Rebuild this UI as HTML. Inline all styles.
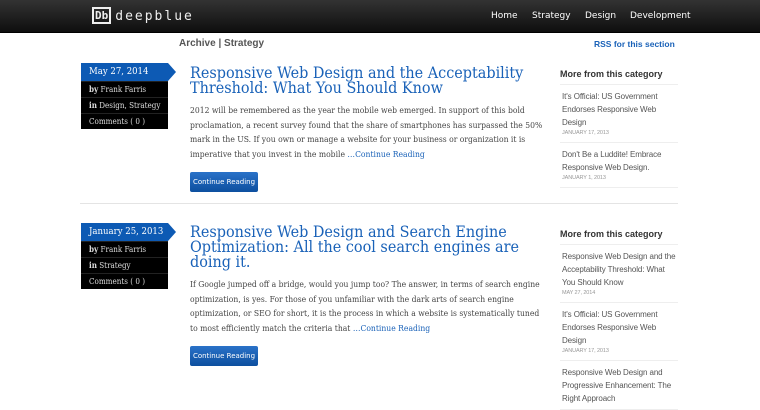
<!DOCTYPE html><html><head><style>
body{margin:0;width:760px;height:400px;overflow:hidden;background:#fff;font-family:"DejaVu Serif Condensed","DejaVu Serif",serif;font-stretch:condensed}
.hd{position:absolute;left:0;top:0;width:760px;height:32px;background:linear-gradient(#333,#0e0e0e);border-bottom:1px solid #000}
.logo{position:absolute;left:92px;top:7px;color:#eee;font:13px "DejaVu Sans Mono",monospace;letter-spacing:2px}
.logo b{display:inline-block;border:2px solid #eee;padding:0 1px;font-size:11px;line-height:13px;margin-right:4px;vertical-align:1px;letter-spacing:0}
.nav{position:absolute;top:11px;color:#fff;font:9px "DejaVu Sans",sans-serif}
.a{position:absolute;font:bold 10px "Liberation Sans",sans-serif;}
.date{position:absolute;left:81px;width:87px;height:18px;background:#0d5ab4;color:#fff;font-size:9.5px;line-height:18px;padding-left:8px;box-sizing:border-box;white-space:nowrap}
.date:after{content:"";position:absolute;right:-8px;top:0;border-left:8px solid #0d5ab4;border-top:9px solid transparent;border-bottom:9px solid transparent}
.meta{position:absolute;left:81px;width:87px;background:#000;color:#ddd;font-size:8px;white-space:nowrap}
.meta div{height:15px;line-height:15px;padding-left:8px;border-top:1px solid #222}
.t{position:absolute;left:190px;color:#1a62b8;font-size:16px;line-height:15px;width:345px}
.p{position:absolute;left:190px;color:#444;font-size:8.5px;line-height:14.5px;white-space:nowrap}
.p span{color:#1a62b8}
.btn{position:absolute;left:190px;width:68px;height:20px;background:linear-gradient(#2a72c8,#0d4f9f);border-radius:2px;color:#fff;font:7px "DejaVu Sans",sans-serif;line-height:20px;text-align:center}
.sb{position:absolute;left:560px;width:118px;font-family:"Liberation Sans",sans-serif;font-stretch:normal}
.sb h4{margin:0;font-size:9px;color:#333;padding-bottom:5px;border-bottom:1px solid #eee}
.sb .i{padding:5px 0 4px 2px;border-bottom:1px solid #eee;color:#555;font-size:8px;line-height:13px;letter-spacing:-0.1px}
.sb .i small{display:block;font-size:5.5px;color:#999;line-height:9px}
</style></head><body>
<div class="hd"><div class="logo"><b>Db</b>deepblue</div>
<span class="nav" style="left:491px">Home</span><span class="nav" style="left:532px">Strategy</span><span class="nav" style="left:585px">Design</span><span class="nav" style="left:630px">Development</span></div>
<div class="a" style="left:179px;top:38px;color:#555">Archive | Strategy</div>
<div class="a" style="left:594px;top:39px;color:#1a62b8;font-size:8.5px">RSS for this section</div>

<div class="date" style="top:63px">May 27, 2014</div>
<div class="meta" style="top:81px"><div><b>by</b> Frank Farris</div><div><b>in</b> Design, Strategy</div><div>Comments ( 0 )</div></div>
<div class="t" style="top:65px">Responsive Web Design and the Acceptability Threshold: What You Should Know</div>
<div class="p" style="top:104px">2012 will be remembered as the year the mobile web emerged. In support of this bold<br>proclamation, a recent survey found that the share of smartphones has surpassed the 50%<br>mark in the US. If you own or manage a website for your business or organization it is<br>imperative that you invest in the mobile <span>…Continue Reading</span></div>
<div class="btn" style="top:172px">Continue Reading</div>
<div class="sb" style="top:69px"><h4>More from this category</h4>
<div class="i">It's Official: US Government Endorses Responsive Web Design<small>JANUARY 17, 2013</small></div>
<div class="i">Don't Be a Luddite! Embrace Responsive Web Design.<small>JANUARY 1, 2013</small></div></div>

<div style="position:absolute;left:80px;top:203px;width:598px;border-top:1px solid #e4e4e4"></div>

<div class="date" style="top:223px">January 25, 2013</div>
<div class="meta" style="top:241px"><div><b>by</b> Frank Farris</div><div><b>in</b> Strategy</div><div>Comments ( 0 )</div></div>
<div class="t" style="top:224px">Responsive Web Design and Search Engine Optimization: All the cool search engines are doing it.</div>
<div class="p" style="top:278px">If Google jumped off a bridge, would you jump too? The answer, in terms of search engine<br>optimization, is yes. For those of you unfamiliar with the dark arts of search engine<br>optimization, or SEO for short, it is the process in which a website is systematically tuned<br>to most efficiently match the criteria that <span>…Continue Reading</span></div>
<div class="btn" style="top:346px">Continue Reading</div>
<div class="sb" style="top:229px"><h4>More from this category</h4>
<div class="i">Responsive Web Design and the Acceptability Threshold: What You Should Know<small>MAY 27, 2014</small></div>
<div class="i">It's Official: US Government Endorses Responsive Web Design<small>JANUARY 17, 2013</small></div>
<div class="i">Responsive Web Design and Progressive Enhancement: The Right Approach</div></div>
</body></html>
